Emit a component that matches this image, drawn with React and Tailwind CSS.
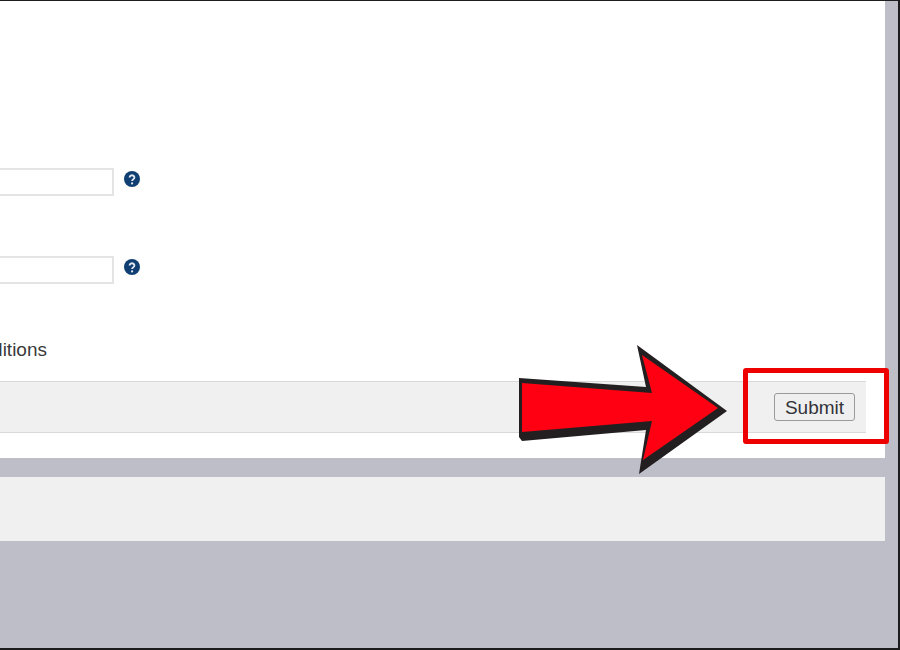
export default function App () {
  return (
    <div className="relative h-[650px] w-[900px] overflow-hidden border-t border-r-2 border-b-2 border-[#1c1c1c] bg-[#bdbec8] font-['Liberation_Sans',Arial,sans-serif]">
      <div className="flex h-[457px] w-[885px] flex-col bg-white pt-[167px] pr-[19px]">
        <div className="flex items-start">
          <div className="h-[28px] w-[114px] border-y-2 border-r-2 border-[#e4e4e4] bg-white" />
          <HelpIcon />
        </div>
        <div className="mt-[60px] flex items-start">
          <div className="h-[28px] w-[114px] border-y-2 border-r-2 border-[#e4e4e4] bg-white" />
          <HelpIcon />
        </div>
        <div className="mt-[55px] flex h-[22px] w-[47px] items-center justify-end whitespace-nowrap text-[19px] text-[#3a3a3a]">
          Terms and Conditions
        </div>
        <div className="mt-[20px] flex h-[52px] items-center justify-end border-y border-[#d9d9d9] bg-[#f0f0f0] pr-[11px]">
          <button type="button" className="h-[28px] w-[81px] rounded-[3px] border border-[#9a9a9a] bg-[#efefef] text-[19px] leading-none text-[#33333b]">
            Submit
          </button>
        </div>
      </div>
      <div className="mt-[19px] h-[64px] w-[885px] bg-[#f0f0f0]" />

      <div className="absolute top-[367px] left-[743px] h-[76px] w-[146px] rounded-[3px] border-[5px] border-[#ee0000]" />
      <svg className="absolute top-[-1px] left-0" width="900" height="650" viewBox="0 0 900 650">
        <polygon points="519,378 646,387 637,345 727,411 639,474 646,430 522,441 519,437" fill="#231f20" />
        <polygon points="522,383 652,393 642,355 718,408 643,460 652,421 522,432" fill="#ff0013" />
      </svg>
    </div>
  )
}

function HelpIcon () {
  return (
    <svg className="mt-[3px] ml-[10px]" width="16" height="16" viewBox="0 0 16 16">
      <circle cx="8" cy="8" r="8" fill="#0f3f72" />
      <path d="M5.6 6.4a2.4 2.2 0 1 1 3.7 1.9c-.9.6-1.2 1-1.2 1.7" fill="none" stroke="#dfe7ef" strokeWidth="1.9" />
      <circle cx="8.1" cy="12.4" r="1.1" fill="#dfe7ef" />
    </svg>
  )
}
